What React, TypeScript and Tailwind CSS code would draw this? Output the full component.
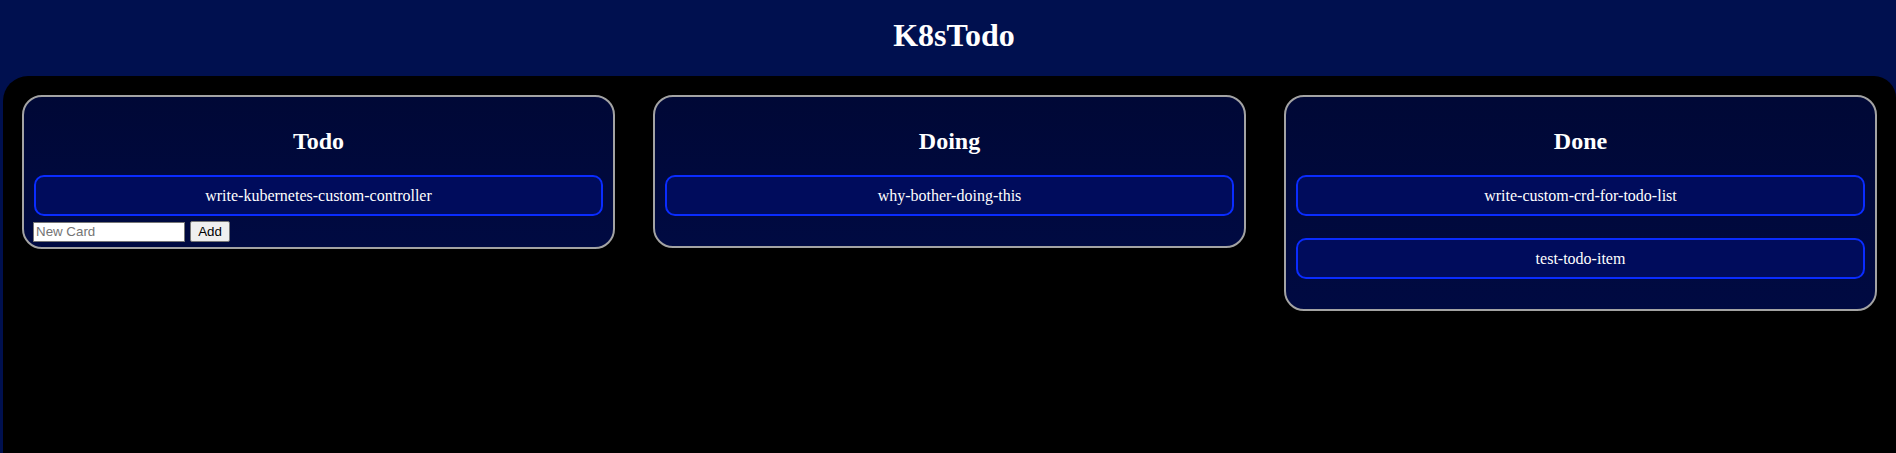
const columns = [
  { title: "Todo", cards: ["write-kubernetes-custom-controller"], form: true },
  { title: "Doing", cards: ["why-bother-doing-this"], form: false },
  { title: "Done", cards: ["write-custom-crd-for-todo-list", "test-todo-item"], form: false },
];

function Card({ name }: { name: string }) {
  return (
    <div className="rounded-[10px] border-2 border-[#0a2cff] bg-[#000c5c] py-[9px] text-center text-[16px] leading-[19px] text-white">
      {name}
    </div>
  );
}

function Column({ title, cards, form }: { title: string; cards: string[]; form: boolean }) {
  return (
    <div className="rounded-[20px] border-2 border-[#a3a3a3] bg-gradient-to-b from-[#000836] to-[#000a42] px-[10px] pt-[30px]">
      <h2 className="mb-[20px] text-center text-[24px] font-bold leading-[28px] text-white">{title}</h2>
      <div className="flex flex-col gap-[22px]">
        {cards.map((c) => (
          <Card key={c} name={c} />
        ))}
      </div>
      {form ? (
        <div className="mt-[5px] flex items-center gap-[5px] pb-[5px] font-['Liberation_Sans',Arial,sans-serif] text-[13.33px]">
          <input
            type="text"
            placeholder="New Card"
            className="-ml-[1px] h-[20px] w-[152px] border border-[#767676] bg-white px-[2px] text-black placeholder:text-[#757575]"
          />
          <button className="h-[21px] w-[40px] rounded-[2px] border border-[#767676] bg-[#efefef] text-black">Add</button>
        </div>
      ) : (
        <div className="h-[30px]" />
      )}
    </div>
  );
}

export default function App() {
  return (
    <div className="flex h-[453px] flex-col overflow-hidden bg-[#00104f] font-['Liberation_Serif','Times_New_Roman',serif]">
      {/* Header */}
      <header className="h-[76px] pl-[12px] pt-[17px]">
        <h1 className="text-center text-[32px] font-bold leading-[37px] text-white">K8sTodo</h1>
      </header>

      {/* Board */}
      <main className="ml-[3px] flex-1 rounded-tl-[25px] rounded-tr-[22px] bg-black px-[19px] pt-[19px]">
        <div className="grid grid-cols-3 items-start gap-[38px]">
          {columns.map((col) => (
            <Column key={col.title} {...col} />
          ))}
        </div>
      </main>
    </div>
  );
}
